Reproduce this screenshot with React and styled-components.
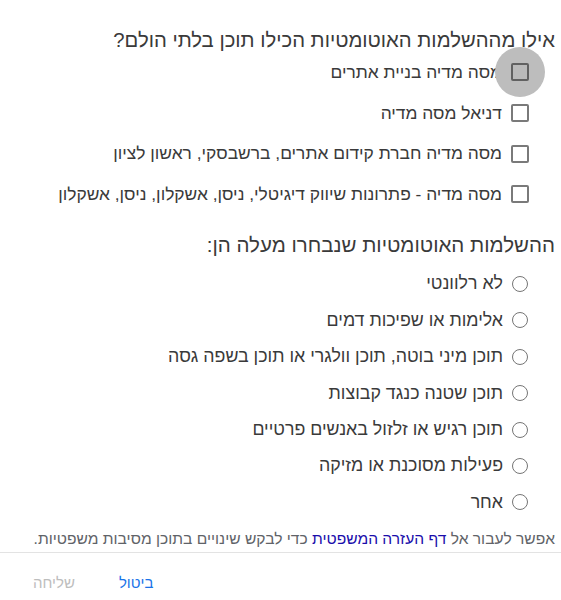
import React from "react";
import styled, { createGlobalStyle } from "styled-components";

const Global = createGlobalStyle`
  html, body { margin: 0; padding: 0; background: #fff; }
  body { font-family: "Liberation Sans", Arial, sans-serif; }
`;

const Dialog = styled.div`
  direction: rtl;
  width: 561px;
  height: 600px;
  box-sizing: border-box;
  display: flex;
  flex-direction: column;
  color: #333;
`;

const Body = styled.div`
  padding: 28px 6px 0 6px;
  display: flex;
  flex-direction: column;
`;

const Title = styled.div`
  font-size: 20.3px;
  line-height: 24px;
  color: #3a3a3a;
  white-space: nowrap;
`;

const SubTitle = styled.div`
  font-size: 20.5px;
  line-height: 24px;
  color: #3a3a3a;
  margin-top: 18px;
  white-space: nowrap;
`;

const List = styled.div`
  display: flex;
  flex-direction: column;
  padding-right: 25px;
  padding-top: ${(p) => p.$pt || 0}px;
`;

const Row = styled.label`
  display: flex;
  align-items: center;
  gap: ${(p) => p.$gap}px;
  height: ${(p) => p.$h}px;
  font-size: ${(p) => p.$fs}px;
  color: #3a3a3a;
  white-space: nowrap;
`;

const BoxWrap = styled.span`
  position: relative;
  width: 20px;
  height: 20px;
  display: flex;
  align-items: center;
  justify-content: center;
  flex-shrink: 0;
`;

const Ripple = styled.span`
  position: absolute;
  width: 50px;
  height: 50px;
  border-radius: 50%;
  background: #bdbdbd;
  left: 50%;
  top: 50%;
  transform: translate(-50%, -50%);
`;

const Box = styled.span`
  position: relative;
  box-sizing: border-box;
  width: 18px;
  height: 18px;
  border: 2px solid ${(p) => (p.$focus ? "#616161" : "#7a7a7a")};
  border-radius: 2px;
  background: ${(p) => (p.$focus ? "#bababa" : "#fff")};
`;

const Radio = styled.span`
  box-sizing: border-box;
  width: 16px;
  height: 16px;
  border: 1.5px solid #757575;
  border-radius: 50%;
  flex-shrink: 0;
  margin: 0 2px;
`;

const Note = styled.div`
  font-size: 15.6px;
  color: #5f6368;
  margin-top: 9px;
  line-height: 20px;
  white-space: nowrap;
`;

const Link = styled.a`
  color: #1a0dab;
  text-decoration: none;
`;

const Divider = styled.div`
  height: 1px;
  background: #e3e3e3;
  margin-top: 3px;
`;

const Actions = styled.div`
  display: flex;
  justify-content: flex-end;
  align-items: center;
  gap: 44px;
  padding: 19px 24px 0 33px;
`;

const Btn = styled.button`
  border: none;
  background: none;
  padding: 0;
  height: 20px;
  font-family: inherit;
  font-size: 15px;
  color: ${(p) => (p.$disabled ? "#bdbdbd" : "#1a73e8")};
  cursor: pointer;
`;

const checks = [
  "מסה מדיה בניית אתרים",
  "דניאל מסה מדיה",
  "מסה מדיה חברת קידום אתרים, ברשבסקי, ראשון לציון",
  "מסה מדיה - פתרונות שיווק דיגיטלי, ניסן, אשקלון, ניסן, אשקלון",
];

const radios = [
  "לא רלוונטי",
  "אלימות או שפיכות דמים",
  "תוכן מיני בוטה, תוכן וולגרי או תוכן בשפה גסה",
  "תוכן שטנה כנגד קבוצות",
  "תוכן רגיש או זלזול באנשים פרטיים",
  "פעילות מסוכנת או מזיקה",
  "אחר",
];

export default function App() {
  return (
    <>
      <Global />
      <Dialog>
        <Body>
          <Title>אילו מההשלמות האוטומטיות הכילו תוכן בלתי הולם?</Title>
          <List>
            {checks.map((c, i) => (
              <Row key={c} $h={40.7} $gap={8} $fs={17.4}>
                <BoxWrap>
                  {i === 0 && <Ripple />}
                  <Box $focus={i === 0} />
                </BoxWrap>
                {c}
              </Row>
            ))}
          </List>
          <SubTitle>ההשלמות האוטומטיות שנבחרו מעלה הן:</SubTitle>
          <List $pt={9}>
            {radios.map((r) => (
              <Row key={r} $h={36.4} $gap={7} $fs={17.8}>
                <Radio />
                {r}
              </Row>
            ))}
          </List>
          <Note>
            אפשר לעבור אל <Link href="#">דף העזרה המשפטית</Link> כדי לבקש שינויים בתוכן מסיבות משפטיות.
          </Note>
        </Body>
        <Divider />
        <Actions>
          <Btn>ביטול</Btn>
          <Btn $disabled>שליחה</Btn>
        </Actions>
      </Dialog>
    </>
  );
}
